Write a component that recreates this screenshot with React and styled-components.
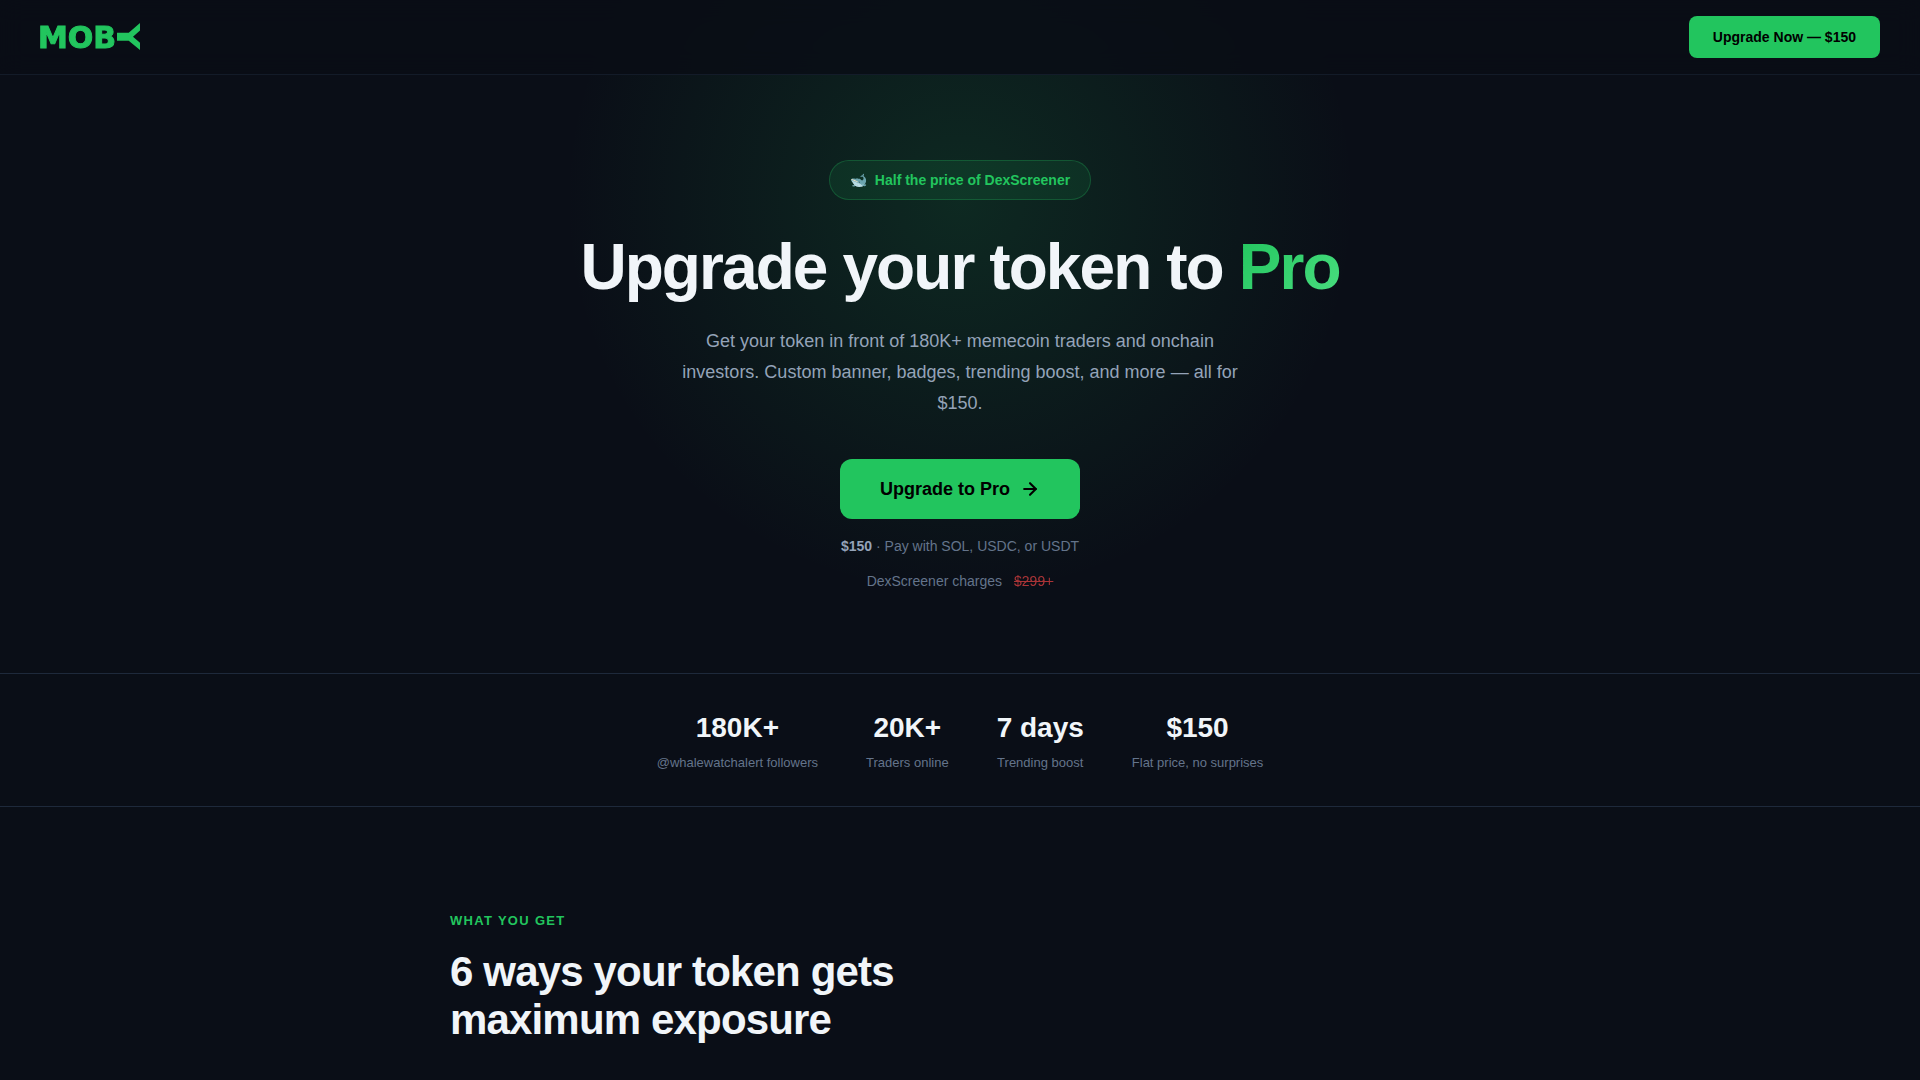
import React from "react";
import styled, { createGlobalStyle } from "styled-components";
import { ArrowRight } from "lucide-react";

const GlobalStyle = createGlobalStyle`
  * {
    box-sizing: border-box;
    margin: 0;
    padding: 0;
  }
  body {
    background: #0a0e17;
    color: #f1f5f9;
    font-family: "Liberation Sans", Arial, sans-serif;
    font-size: 16px;
    overflow-x: hidden;
    -webkit-font-smoothing: antialiased;
  }
`;

const Nav = styled.nav`
  position: fixed;
  top: 0;
  left: 0;
  right: 0;
  z-index: 10;
  display: flex;
  align-items: center;
  justify-content: space-between;
  padding: 16px 40px;
  background: rgba(9, 13, 21, 0.85);
  backdrop-filter: blur(12px);
  border-bottom: 1px solid rgba(30, 41, 59, 0.5);
`;

const Logo = styled.a`
  display: flex;
  align-items: center;
  color: #22c55e;
  text-decoration: none;
`;

const LogoMark = styled.svg`
  display: block;
  width: 100px;
  height: 28px;
  overflow: visible;
`;

const LogoText = styled.text`
  font-family: "DejaVu Sans", sans-serif;
  font-size: 30px;
  font-weight: 700;
  fill: currentColor;
  stroke: currentColor;
`;

const NavButton = styled.button`
  padding: 10px 24px;
  border: none;
  border-radius: 8px;
  background: #22c55e;
  color: #000;
  font-family: inherit;
  font-size: 14px;
  font-weight: 700;
  line-height: 22px;
  cursor: pointer;
`;

const Hero = styled.section`
  position: relative;
  display: flex;
  flex-direction: column;
  align-items: center;
  padding: 160px 40px 80px;
  text-align: center;
`;

const Glow = styled.div`
  position: absolute;
  top: -200px;
  left: 50%;
  width: 800px;
  height: 800px;
  transform: translateX(-50%);
  background: radial-gradient(circle, rgba(34, 197, 94, 0.15) 0%, transparent 70%);
  pointer-events: none;
`;

const Badge = styled.div`
  position: relative;
  display: inline-flex;
  align-items: center;
  gap: 8px;
  margin-bottom: 32px;
  padding: 8px 20px;
  border: 1px solid rgba(34, 197, 94, 0.25);
  border-radius: 100px;
  background: rgba(34, 197, 94, 0.1);
  color: #22c55e;
  font-size: 14px;
  font-weight: 600;
  line-height: 22px;
`;

const Title = styled.h1`
  position: relative;
  margin-bottom: 24px;
  font-size: 64px;
  font-weight: 800;
  letter-spacing: -0.03em;
  line-height: 70px;
`;

const Highlight = styled.span`
  background: linear-gradient(135deg, #22c55e, #4ade80);
  -webkit-background-clip: text;
  background-clip: text;
  -webkit-text-fill-color: transparent;
`;

const Subtitle = styled.p`
  position: relative;
  max-width: 560px;
  margin-bottom: 40px;
  color: #94a3b8;
  font-size: 18px;
  line-height: 31px;
`;

const HeroButton = styled.button`
  position: relative;
  display: inline-flex;
  align-items: center;
  gap: 10px;
  padding: 16px 40px;
  border: none;
  border-radius: 12px;
  background: #22c55e;
  color: #000;
  font-family: inherit;
  font-size: 18px;
  font-weight: 700;
  line-height: 28px;
  cursor: pointer;
`;

const PriceNote = styled.p`
  position: relative;
  margin-top: 16px;
  color: #64748b;
  font-size: 14px;
  line-height: 22px;

  strong {
    color: #94a3b8;
  }
`;

const Compare = styled.div`
  position: relative;
  display: flex;
  gap: 12px;
  margin-top: 12px;
  color: #64748b;
  font-size: 14px;
  line-height: 24px;
`;

const OldPrice = styled.s`
  color: #ef4444;
  opacity: 0.7;
`;

const Stats = styled.section`
  display: flex;
  justify-content: center;
  flex-wrap: wrap;
  gap: 48px;
  padding: 32px 40px;
  border-top: 1px solid #1e293b;
  border-bottom: 1px solid #1e293b;
`;

const Stat = styled.div`
  text-align: center;
`;

const StatValue = styled.div`
  font-size: 28px;
  font-weight: 800;
  line-height: 44px;
`;

const StatLabel = styled.div`
  margin-top: 2px;
  color: #64748b;
  font-size: 13px;
  line-height: 22px;
`;

const Features = styled.section`
  max-width: 1100px;
  margin: 0 auto;
  padding: 103px 40px 32px;
`;

const SectionLabel = styled.p`
  margin-bottom: 16px;
  color: #22c55e;
  font-size: 13px;
  font-weight: 700;
  letter-spacing: 0.1em;
  line-height: 22px;
  text-transform: uppercase;
`;

const SectionTitle = styled.h2`
  max-width: 500px;
  font-size: 42px;
  font-weight: 800;
  letter-spacing: -0.02em;
  line-height: 48px;
`;

const stats = [
  { value: "180K+", label: "@whalewatchalert followers" },
  { value: "20K+", label: "Traders online" },
  { value: "7 days", label: "Trending boost" },
  { value: "$150", label: "Flat price, no surprises" },
];

export default function App() {
  return (
    <>
      <GlobalStyle />
      <Nav>
        <Logo href="#" aria-label="MOBY">
          <LogoMark viewBox="0 0 100 28">
            <LogoText x="-2" y="25">
              MOB
            </LogoText>
            {/* whale tail */}
            <path
              d="M77 9.7H88.7L100 0V7.5L93 13.7L100 19.7V27L88.7 17.7H77Z"
              fill="currentColor"
            />
          </LogoMark>
        </Logo>
        <NavButton>Upgrade Now — $150</NavButton>
      </Nav>

      <Hero>
        <Glow />
        <Badge>
          <span>🐋</span>
          <span>Half the price of DexScreener</span>
        </Badge>
        <Title>
          Upgrade your token to <Highlight>Pro</Highlight>
        </Title>
        <Subtitle>
          Get your token in front of 180K+ memecoin traders and onchain
          investors. Custom banner, badges, trending boost, and more — all for
          $150.
        </Subtitle>
        <HeroButton>
          Upgrade to Pro
          <ArrowRight size={20} strokeWidth={2.5} />
        </HeroButton>
        <PriceNote>
          <strong>$150</strong> · Pay with SOL, USDC, or USDT
        </PriceNote>
        <Compare>
          <span>DexScreener charges</span>
          <OldPrice>$299+</OldPrice>
        </Compare>
      </Hero>

      <Stats>
        {stats.map((stat) => (
          <Stat key={stat.label}>
            <StatValue>{stat.value}</StatValue>
            <StatLabel>{stat.label}</StatLabel>
          </Stat>
        ))}
      </Stats>

      <Features>
        <SectionLabel>What you get</SectionLabel>
        <SectionTitle>6 ways your token gets maximum exposure</SectionTitle>
      </Features>
    </>
  );
}
